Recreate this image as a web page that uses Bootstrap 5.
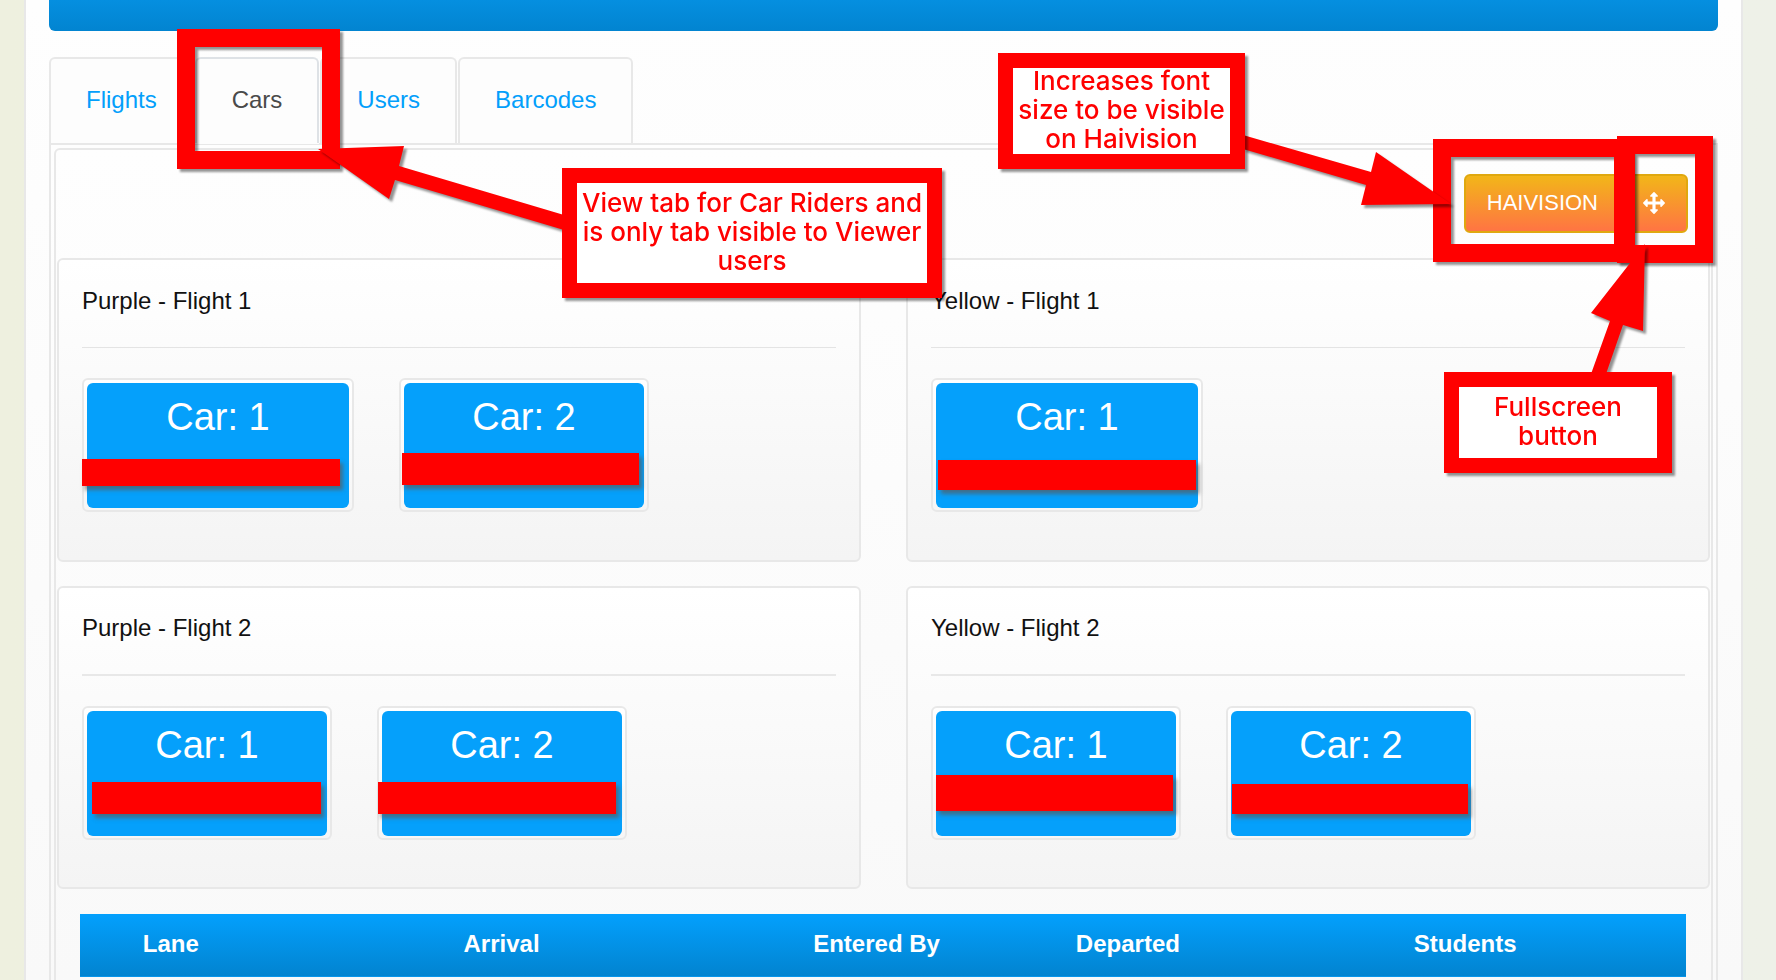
<!DOCTYPE html>
<html lang="en">
<head>
<meta charset="utf-8">
<meta name="viewport" content="width=device-width, initial-scale=1">
<title>Car Riders</title>
<link href="https://cdn.jsdelivr.net/npm/bootstrap@5.3.0/dist/css/bootstrap.min.css" rel="stylesheet">
<style>
  :root { --line: #e8e8e8; --brand: #039ffb; }
  body {
    font-family: "Liberation Sans", Arial, sans-serif;
    font-size: 24px; line-height: 30px; color: #111;
    background: linear-gradient(to right, #eef0df, #eef1e8);
    overflow-x: hidden;
  }
  .page-panel {
    min-height: 100vh; margin: 0 33px 0 24px; padding: 0 23px;
    border: solid var(--line); border-width: 0 2px;
    background: linear-gradient(#fefefe, #f9f9f9);
  }
  .page-banner { height: 31px; border-radius: 0 0 6px 6px; background: linear-gradient(#058fe0, #0284d0); }

  /* Tabs */
  .view-tabs { margin-top: 26px; gap: 1px; border: 0; }
  .view-tabs .nav-link {
    margin: 0; padding: 26px 35px 28px; color: var(--brand);
    border: 2px solid var(--line); border-bottom: 0; border-radius: 6px 6px 0 0;
    background: #fdfdfd; line-height: 30px;
  }
  .view-tabs .nav-link.active { color: #4a4a4a; background: #fdfdfd; box-shadow: 0 1px #fdfdfd; position: relative; }
  .view-frame { padding: 3px 3px 0; border: 2px solid var(--line); border-bottom: 0; background: linear-gradient(#fefefe, #f9f9f9); }
  .view-body { padding: 0 1px; border: 2px solid var(--line); border-bottom: 0; border-radius: 6px 6px 0 0; }
  .tools { padding: 24px 22px 25px; }
  .btn-amber {
    padding: 12px 21px 13px; color: #fff; font-size: 22px; line-height: 30px;
    border: 2px solid #e0a80f; border-radius: 6px;
    background: linear-gradient(#f2b619, #ff7443);
  }
  .btn-amber:hover { color: #fff; border-color: #c9960c; }

  /* Flight cards */
  .flight-grid { display: grid; grid-template-columns: 1fr 1fr; gap: 24px 45px; }
  .flight {
    padding: 26px 23px 48px; border: 2px solid var(--line); border-radius: 6px;
    background: linear-gradient(#fff, #f4f4f4);
  }
  .flight-later { padding: 25px 23px 47px; }
  .flight h2 { margin: 0 0 31px; font-size: 24px; line-height: 30px; font-weight: 400; }
  .flight hr { margin: 0 0 30px; border: 0; border-top: 1px solid #e4e4e4; opacity: 1; }
  .flight-later hr { border-top: 2px solid var(--line); }
  .car-list { gap: 45px; }
  .car-tile {
    position: relative; width: 250px; height: 134px; padding: 3px 3px 2px;
    border: 2px solid var(--line); border-radius: 6px;
    background: linear-gradient(#fff, #f6f6f6);
  }
  .car-wide { width: 272px; }
  .car-face { height: 100%; padding-top: 12px; border-radius: 6px; background: #05a0fb; color: #fff; font-size: 38px; line-height: 44px; text-align: center; }

  /* Bars that hide student names */
  .hide-bar { position: absolute; background: #f00; box-shadow: 3px 4px 4px rgba(90,90,90,.7); left: 0; right: 12px; top: 74px; height: 32px; }
  .bar-a { left: -2px; top: 79px; height: 27px; }
  .bar-b { left: 1px; right: 8px; top: 73px; }
  .bar-c { left: 5px; right: 5px; top: 80px; height: 30px; }
  .bar-d { left: 8px; right: 9px; }
  .bar-e { left: -1px; right: 9px; }
  .bar-f { left: 3px; right: 6px; top: 67px; height: 36px; }
  .bar-g { left: 4px; right: 6px; top: 76px; height: 30px; }

  /* Rider table */
  .rider-wrap { padding: 25px 24px 0 23px; }
  .rider-table { width: 100%; table-layout: fixed; background: linear-gradient(#03a0fd, #0283cf); color: #fff; border-bottom: 1px solid #0069b0; }
  .rider-table th { padding: 15px 0 17px; text-align: center; font-weight: 700; border-bottom: 1px solid #0795ea; }
  .w-lane { width: 11.3%; } .w-arrival { width: 29.9%; } .w-entered { width: 16.8%; } .w-departed { width: 14.5%; }

  /* Annotations laid over the page */
  .mark-box, .note, .arrow { position: absolute; filter: drop-shadow(3px 3px 1px rgba(0,0,0,.42)); pointer-events: none; }
  .mark-box { border: 18px solid #f00; }
  .note {
    display: flex; align-items: center; justify-content: center;
    border: 15px solid #f00; background: #fff; color: #f00; padding-bottom: 3px;
    font: 500 26px/29px Inter, "Liberation Sans", sans-serif; text-align: center; white-space: nowrap;
  }
  .arrow { fill: #f00; overflow: visible; }
  .mark-cars { left: 177px; top: 29px; width: 163px; height: 140px; }
  .mark-hai { right: 144px; top: 139px; width: 199px; height: 123px; }
  .mark-full { right: 63px; top: 136px; width: 96px; height: 127px; }
  .note-cars { left: 562px; top: 168px; width: 380px; height: 130px; }
  .note-hai { right: 531px; top: 53px; width: 247px; height: 116px; }
  .note-full { right: 104px; top: 372px; width: 228px; height: 101px; }
  .arrow-cars { left: 318px; top: 146px; }
  .arrow-hai { right: 325px; top: 135px; }
  .arrow-full { right: 131px; top: 244px; }
</style>
</head>
<body class="position-relative">
<main class="page-panel d-flex flex-column">
  <div class="page-banner"></div>

  <ul class="nav nav-tabs view-tabs">
    <li class="nav-item"><a class="nav-link" href="#flights">Flights</a></li>
    <li class="nav-item"><a class="nav-link active" aria-current="page" href="#cars">Cars</a></li>
    <li class="nav-item"><a class="nav-link" href="#users">Users</a></li>
    <li class="nav-item"><a class="nav-link" href="#barcodes">Barcodes</a></li>
  </ul>

  <div class="view-frame flex-grow-1 d-flex flex-column">
    <div class="view-body flex-grow-1" id="cars">
      <div class="tools d-flex justify-content-end">
        <div class="btn-group">
          <button type="button" class="btn btn-amber">HAIVISION</button>
          <button type="button" class="btn btn-amber d-flex align-items-center" aria-label="Fullscreen">
            <svg width="22" height="22" viewBox="0 0 1792 1792" fill="#fff" aria-hidden="true"><path d="M1792 896q0 26-19 45l-256 256q-19 19-45 19t-45-19-19-45v-128h-384v384h128q26 0 45 19t19 45-19 45l-256 256q-19 19-45 19t-45-19l-256-256q-19-19-19-45t19-45 45-19h128v-384h-384v128q0 26-19 45t-45 19-45-19l-256-256q-19-19-19-45t19-45l256-256q19-19 45-19t45 19 19 45v128h384v-384h-128q-26 0-45-19t-19-45 19-45l256-256q19-19 45-19t45 19l256 256q19 19 19 45t-19 45-45 19h-128v384h384v-128q0-26 19-45t45-19 45 19l256 256q19 19 19 45z"/></svg>
          </button>
        </div>
      </div>

      <div class="flight-grid">
        <section class="flight">
          <h2>Purple - Flight 1</h2><hr>
          <div class="car-list d-flex">
            <div class="car-tile car-wide"><div class="car-face">Car: 1</div><span class="hide-bar bar-a"></span></div>
            <div class="car-tile"><div class="car-face">Car: 2</div><span class="hide-bar bar-b"></span></div>
          </div>
        </section>
        <section class="flight">
          <h2>Yellow - Flight 1</h2><hr>
          <div class="car-list d-flex">
            <div class="car-tile car-wide"><div class="car-face">Car: 1</div><span class="hide-bar bar-c"></span></div>
          </div>
        </section>
        <section class="flight flight-later">
          <h2>Purple - Flight 2</h2><hr>
          <div class="car-list d-flex">
            <div class="car-tile"><div class="car-face">Car: 1</div><span class="hide-bar bar-d"></span></div>
            <div class="car-tile"><div class="car-face">Car: 2</div><span class="hide-bar bar-e"></span></div>
          </div>
        </section>
        <section class="flight flight-later">
          <h2>Yellow - Flight 2</h2><hr>
          <div class="car-list d-flex">
            <div class="car-tile"><div class="car-face">Car: 1</div><span class="hide-bar bar-f"></span></div>
            <div class="car-tile"><div class="car-face">Car: 2</div><span class="hide-bar bar-g"></span></div>
          </div>
        </section>
      </div>

      <div class="rider-wrap">
        <table class="rider-table">
          <thead><tr>
            <th scope="col" class="w-lane">Lane</th>
            <th scope="col" class="w-arrival">Arrival</th>
            <th scope="col" class="w-entered">Entered By</th>
            <th scope="col" class="w-departed">Departed</th>
            <th scope="col">Students</th>
          </tr></thead>
        </table>
      </div>
    </div>
  </div>
</main>

<div class="mark-box mark-cars"></div>
<div class="mark-box mark-hai"></div>
<div class="mark-box mark-full"></div>
<svg class="arrow arrow-cars" width="244" height="84" aria-hidden="true"><path d="M0 3 86 0 81 20 246 69V84L77 34 71 53Z"/></svg>
<svg class="arrow arrow-hai" width="206" height="70" aria-hidden="true"><path d="M-2 0 126 37 131 17 206 69 116 70 121 50-2 14Z"/></svg>
<svg class="arrow arrow-full" width="54" height="130" aria-hidden="true"><path d="M54 0 0 69 19 77 0 130H15L32 81 52 87Z"/></svg>
<div class="note note-cars">View tab for Car Riders and<br>is only tab visible to Viewer<br>users</div>
<div class="note note-hai">Increases font<br>size to be visible<br>on Haivision</div>
<div class="note note-full">Fullscreen<br>button</div>

<script src="https://cdn.jsdelivr.net/npm/bootstrap@5.3.0/dist/js/bootstrap.bundle.min.js"></script>
</body>
</html>
